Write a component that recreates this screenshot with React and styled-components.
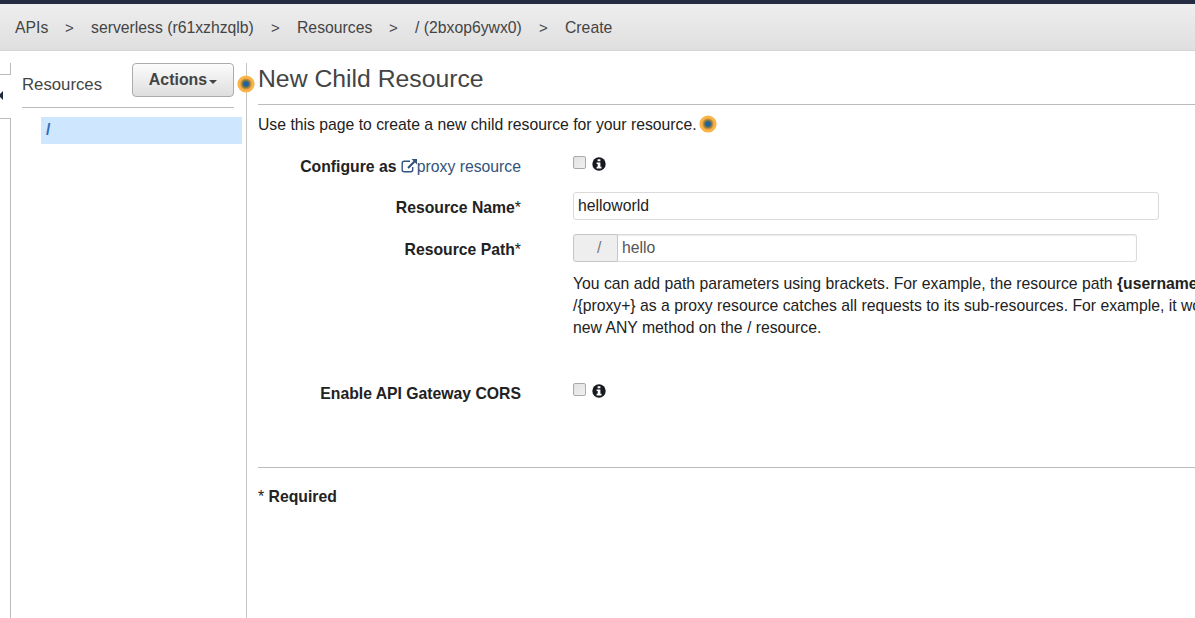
import React from "react";
import styled, { createGlobalStyle } from "styled-components";

const Global = createGlobalStyle`
  * { box-sizing: border-box; }
  html, body { margin: 0; height: 100%; overflow: hidden; }
  body {
    background: #fff;
    color: #222;
    font: 15.75px/22px "Liberation Sans", Arial, sans-serif;
  }
`;

const Page = styled.div`
  display: flex;
  flex-direction: column;
  height: 618px;
  width: 1195px;
  overflow: hidden;
`;

const Breadcrumbs = styled.nav`
  display: flex;
  flex: none;
  height: 51px;
  padding: 13px 0 0 15px;
  border-top: 4px solid #232c40;
  border-bottom: 1px solid #d3d3d3;
  background: linear-gradient(#eeeeee, #dfdfdf);
  color: #444;
  white-space: nowrap;
`;

const Crumb = styled.span`
  width: ${(p) => p.$width}px;
`;

const Separator = styled.span`
  width: 26px;
  font-size: 15px;
`;

const Body = styled.div`
  display: flex;
  flex: 1;
  padding-top: 12px;
`;

const Rail = styled.div`
  display: flex;
  flex-direction: column;
  width: 11px;
`;

const RailTop = styled.div`
  height: 12px;
  border-right: 1px solid #bbb;
  border-bottom: 1px solid #bbb;
`;

const RailHandle = styled.div`
  height: 43px;
  padding-top: 15px;
`;

const RailBottom = styled.div`
  flex: 1;
  border-top: 1px solid #bbb;
  border-right: 1px solid #bbb;
`;

const Sidebar = styled.aside`
  position: relative;
  width: 236px;
  border-right: 1px solid #c4c4c4;
`;

const SidebarHead = styled.div`
  display: flex;
  justify-content: space-between;
  width: 212px;
  height: 45px;
  margin-left: 11px;
  border-bottom: 1px solid #bbb;
  color: #444;
`;

const SidebarTitle = styled.span`
  padding-top: 11px;
  font-size: 16.75px;
`;

const ActionsButton = styled.button`
  display: flex;
  align-items: center;
  justify-content: center;
  gap: 2px;
  width: 102px;
  height: 34px;
  padding: 0 0 1px;
  border: 1px solid #acacac;
  border-radius: 4px;
  background: linear-gradient(#fcfcfc, #dedede);
  color: #444;
  font: bold 15.9px "Liberation Sans", Arial, sans-serif;
`;

const Caret = styled.span`
  margin-top: 4px;
  border: 4.5px solid transparent;
  border-top-color: #444;
  border-bottom: 0;
`;

const TreeItem = styled.div`
  width: 201px;
  height: 27px;
  margin: 9px 0 0 30px;
  padding: 2px 5px;
  background: #cfe6ff;
  color: #2f6cb3;
  font-weight: bold;
`;

const EdgeDot = styled.span`
  position: absolute;
  top: 12px;
  right: -9px;
  line-height: 0;
`;

const Main = styled.main`
  flex: 1;
  min-width: 0;
  padding-left: 11px;
`;

const Title = styled.h1`
  height: 42px;
  margin: 0;
  padding-top: 1px;
  border-bottom: 1px solid #bbb;
  color: #444;
  font-size: 24.75px;
  font-weight: normal;
  line-height: 29px;
`;

const Intro = styled.p`
  display: flex;
  gap: 2px;
  align-items: flex-start;
  height: 22px;
  margin: 9px 0 0;
  svg { margin-top: 1px; }
`;

const Form = styled.div`
  display: grid;
  grid-template-columns: 263px 1fr;
  grid-template-rows: 39px 42px 41px 109px 100px;
  column-gap: 52px;
  height: 332px;
  border-bottom: 1px solid #bbb;
`;

const Label = styled.label`
  padding-top: ${(p) => p.$top || 20}px;
  font-weight: bold;
  text-align: right;
  white-space: nowrap;
`;

const Star = styled.span`
  font-weight: normal;
`;

const ProxyLink = styled.a`
  color: #31537c;
  font-weight: normal;
  svg { vertical-align: -1px; }
`;

const Checks = styled.div`
  display: flex;
  gap: 6px;
  align-items: flex-start;
  padding-top: ${(p) => p.$top}px;
`;

const Checkbox = styled.span`
  width: 13px;
  height: 13px;
  border: 1px solid #aaa;
  border-radius: 2px;
  background: linear-gradient(135deg, #e2e2e2, #f0f0f0);
`;

const InfoWrap = styled.span`
  padding-top: 1px;
  line-height: 0;
`;

const Input = styled.div`
  width: ${(p) => p.$width}px;
  height: 28px;
  padding: 2px 4px;
  border: 1px solid #dadada;
  border-radius: ${(p) => (p.$joined ? "0 3px 3px 0" : "3px")};
  border-left-width: ${(p) => (p.$joined ? 0 : 1)}px;
  box-shadow: ${(p) => (p.$joined ? "inset 0 1px 1px #ececec" : "none")};
  color: ${(p) => (p.$joined ? "#555" : "#222")};
`;

const Field = styled.div`
  display: flex;
  padding-top: ${(p) => p.$top}px;
`;

const Addon = styled.span`
  width: 45px;
  height: 28px;
  padding: 2px 0 0 23px;
  border: 1px solid #c6c6c6;
  border-radius: 3px 0 0 3px;
  background: #eee;
  color: #777;
`;

const Help = styled.div`
  padding-top: 15px;
  white-space: nowrap;
`;

const Required = styled.p`
  margin: 18px 0 0;
  font-weight: bold;
`;

const Dot = () => (
  <svg width="18" height="18" viewBox="0 0 18 18">
    <circle cx="9" cy="9" r="8.6" fill="#f9b347" />
    <circle cx="9" cy="9" r="5.5" fill="#c28b3f" />
    <circle cx="9" cy="9" r="4" fill="#77783f" />
    <circle cx="9" cy="9" r="2.8" fill="#1d62a5" />
  </svg>
);

const Info = () => (
  <svg width="14" height="14" viewBox="0 0 14 14">
    <circle cx="7" cy="7" r="6.7" fill="#16191f" />
    <path d="M5.6 2.2h2.8v2.1H5.6zM4.6 5.4h3.8v4.4h1.1v1.7H4.6V9.8h1.1V7.1H4.6z" fill="#fff" />
  </svg>
);

const External = () => (
  <svg width="16" height="14" viewBox="0 0 16 14">
    <path d="M9 2.3H3.2Q1.2 2.3 1.2 4.3v6.5q0 2 2 2h6.5q2 0 2-2V8" fill="none" stroke="#31537c" strokeWidth="1.4" />
    <path d="M10.5 0H16v5.5l-2-2-6.2 6.2-1.5-1.5 6.2-6.2z" fill="#31537c" />
  </svg>
);

const crumbs = [
  ["APIs", 50],
  ["serverless (r61xzhzqlb)", 180],
  ["Resources", 92],
  ["/ (2bxop6ywx0)", 124],
];

export default function App() {
  return (
    <Page>
      <Global />
      <Breadcrumbs>
        {crumbs.map(([text, width]) => (
          <React.Fragment key={text}>
            <Crumb $width={width}>{text}</Crumb>
            <Separator>&gt;</Separator>
          </React.Fragment>
        ))}
        <Crumb>Create</Crumb>
      </Breadcrumbs>
      <Body>
        <Rail>
          <RailTop />
          <RailHandle>
            <svg width="3" height="12" viewBox="0 0 3 12" display="block">
              <path d="M3 1v9L0 7V4z" fill="#222b3c" />
            </svg>
          </RailHandle>
          <RailBottom />
        </Rail>
        <Sidebar>
          <SidebarHead>
            <SidebarTitle>Resources</SidebarTitle>
            <ActionsButton>Actions<Caret /></ActionsButton>
          </SidebarHead>
          <TreeItem>/</TreeItem>
          <EdgeDot><Dot /></EdgeDot>
        </Sidebar>
        <Main>
          <Title>New Child Resource</Title>
          <Intro>Use this page to create a new child resource for your resource.<Dot /></Intro>
          <Form>
            <Label>Configure as <ProxyLink><External />proxy resource</ProxyLink></Label>
            <Checks $top={20}><Checkbox /><InfoWrap><Info /></InfoWrap></Checks>
            <Label $top={22}>Resource Name<Star>*</Star></Label>
            <Field $top={17}><Input $width={586}>helloworld</Input></Field>
            <Label $top={22}>Resource Path<Star>*</Star></Label>
            <Field $top={17}><Addon>/</Addon><Input $joined $width={519}>hello</Input></Field>
            <span />
            <Help>
              You can add path parameters using brackets. For example, the resource path <b>{"{username}"}</b><br />
              {"/{proxy+}"} as a proxy resource catches all requests to its sub-resources. For example, it works<br />
              new ANY method on the / resource.
            </Help>
            <Label $top={16}>Enable API Gateway CORS</Label>
            <Checks $top={16}><Checkbox /><InfoWrap><Info /></InfoWrap></Checks>
          </Form>
          <Required><Star>*</Star> Required</Required>
        </Main>
      </Body>
    </Page>
  );
}
